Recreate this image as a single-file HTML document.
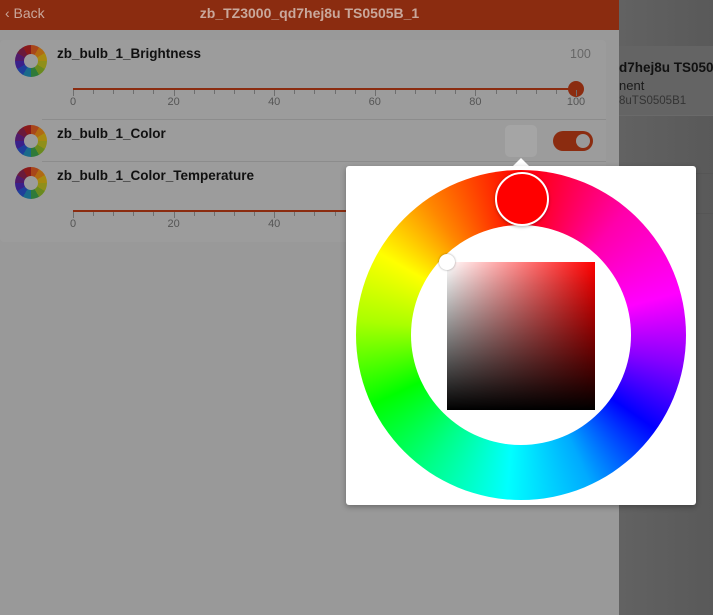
<!DOCTYPE html><html><head><style>
*{margin:0;padding:0;box-sizing:border-box}
body{width:713px;height:615px;overflow:hidden;background:#999;font-family:"Liberation Sans",sans-serif;position:relative}
.right{position:absolute;left:619px;top:0;width:94px;height:615px;background:linear-gradient(90deg,#626262,#595959)}
.hdr{position:absolute;left:0;top:0;width:619px;height:30px;background:#8b2c10;color:#c9a89c;font-size:14px}
.card{position:absolute;left:0;top:40px;width:606px;height:202px;background:#9c9c9c;border-radius:4px}
.ic{position:absolute;width:32px;height:32px;border-radius:50%;background:conic-gradient(#a8461a 0 30deg,#b06a12 30deg 60deg,#a88a10 60deg 90deg,#8f8f1a 90deg 120deg,#6a8a1f 120deg 150deg,#2f7a3a 150deg 180deg,#1a6a8a 180deg 210deg,#1f3f9a 210deg 240deg,#3a208a 240deg 270deg,#501a6a 270deg 300deg,#6a1a3a 300deg 330deg,#8a1a1a 330deg 360deg)}
.ic::after{content:"";position:absolute;left:9px;top:9px;width:14px;height:14px;border-radius:50%;background:#9c9c9c}
.t{position:absolute;font-weight:bold;font-size:13.5px;color:#111}
.track{position:absolute;left:73px;width:503px;height:2px;background:#8b2c10}
.tick{position:absolute;width:1px;height:4px;background:#6e6e6e}
.lab{position:absolute;font-size:11px;color:#555;transform:translateX(-50%)}
.sep{position:absolute;left:42px;width:564px;height:1px;background:#8c8c8c}
</style></head><body>
<div class="right">
<div style="position:absolute;left:0;top:46px;width:94px;height:70px;background:#646464;border-bottom:1px solid #6a6a6a"></div>
<div style="position:absolute;left:0;top:60px;font-weight:bold;font-size:13.5px;color:#111;white-space:nowrap">d7hej8u TS050</div>
<div style="position:absolute;left:0;top:78px;font-size:13px;color:#1a1a1a">nent</div>
<div style="position:absolute;left:0;top:95px;font-size:11.5px;color:#333">8uTS0505B1</div>
<div style="position:absolute;left:0;top:173px;width:94px;height:1px;background:#555"></div>
<div style="position:absolute;left:0;top:213px;width:94px;height:1px;background:#555"></div>
</div>
<div class="hdr"><span style="position:absolute;left:5px;top:5px">&#x2039; Back</span><span style="position:absolute;left:0;width:619px;text-align:center;top:5px;font-weight:bold">zb_TZ3000_qd7hej8u TS0505B_1</span></div>
<div class="card"></div>
<div class="ic" style="left:15px;top:45px"></div>
<div class="ic" style="left:15px;top:125px"></div>
<div class="ic" style="left:15px;top:167px"></div>
<div class="t" style="left:57px;top:46px">zb_bulb_1_Brightness</div>
<div style="position:absolute;left:570px;top:47px;font-size:12.5px;color:#666">100</div>
<div class="t" style="left:57px;top:126px">zb_bulb_1_Color</div>
<div class="t" style="left:57px;top:168px">zb_bulb_1_Color_Temperature</div>
<div class="sep" style="top:119px"></div><div class="sep" style="top:161px"></div>
<div class="track" style="top:88px"></div>
<div style="position:absolute;left:568px;top:81px;width:16px;height:16px;border-radius:50%;background:#8b2c10"></div>
<div class="track" style="top:210px"></div>
<div id="ticks"></div>
<div style="position:absolute;left:505px;top:125px;width:32px;height:32px;border-radius:5px;background:#a5a5a5"></div>
<div style="position:absolute;left:553px;top:131px;width:40px;height:20px;border-radius:10px;background:#8b2c10"><div style="position:absolute;right:3px;top:3px;width:14px;height:14px;border-radius:50%;background:#999"></div></div>
<div style="position:absolute;left:513px;top:158px;width:0;height:0;border-left:8px solid transparent;border-right:8px solid transparent;border-bottom:8px solid #fff"></div>
<div style="position:absolute;left:346px;top:166px;width:350px;height:339px;background:#fff;border-radius:3px;box-shadow:0 2px 6px rgba(0,0,0,.3)"></div>
<div style="position:absolute;left:356px;top:170px;width:330px;height:330px;border-radius:50%;background:conic-gradient(#f00,#f0a 40deg,#f0f 75deg,#80f 100deg,#00f 125deg,#0af 155deg,#0ff 185deg,#0f8 215deg,#0f0 245deg,#af0 275deg,#ff0 300deg,#f80 325deg,#f00)"></div>
<div style="position:absolute;left:411px;top:225px;width:220px;height:220px;border-radius:50%;background:#fff"></div>
<div style="position:absolute;left:447px;top:262px;width:148px;height:148px;background:linear-gradient(to bottom,transparent,#000),linear-gradient(to right,#fff,#f00)"></div>
<div style="position:absolute;left:439px;top:254px;width:16px;height:16px;border-radius:50%;background:#fff;box-shadow:0 0 2px rgba(0,0,0,.4)"></div>
<div style="position:absolute;left:495px;top:172px;width:54px;height:54px;border-radius:50%;background:#f00;border:2px solid #fff;box-shadow:0 1px 3px rgba(0,0,0,.3)"></div>
<script>
var h='';
[88,210].forEach(function(y){for(var i=0;i<=25;i++){var x=73+i*503/25;h+='<div class="tick" style="left:'+x+'px;top:'+(y+2)+'px;height:'+(i%5==0?6:4)+'px"></div>';}
for(var j=0;j<=5;j++){var x=73+j*503/5;if(y==210&&x>340)continue;h+='<div class="lab" style="left:'+x+'px;top:'+(y+8)+'px">'+(j*20)+'</div>';}});
document.getElementById('ticks').innerHTML=h;
</script>
</body></html>
